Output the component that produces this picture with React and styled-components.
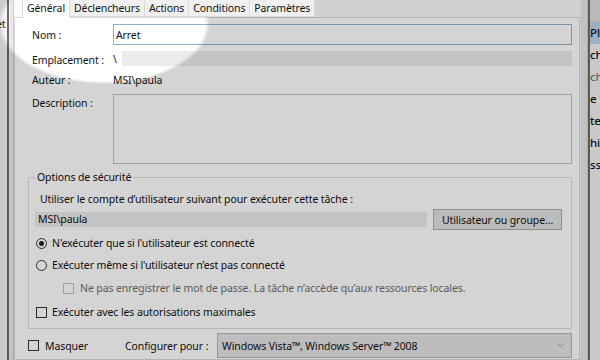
import React from "react";
import styled, { createGlobalStyle } from "styled-components";
import { ChevronDown } from "lucide-react";

const GlobalStyle = createGlobalStyle`
  html, body {
    margin: 0;
    padding: 0;
    background: #d3d3d3;
  }
  body {
    font-family: "Noto Sans", "Segoe UI", sans-serif;
    font-size: 10.5px;
    letter-spacing: -0.1px;
    color: #111;
  }
  * { box-sizing: border-box; }
`;

const Screen = styled.div`
  position: relative;
  width: 600px;
  height: 360px;
  overflow: hidden;
  display: flex;
  background: #f0f0f0;
`;

const LeftEdge = styled.div`
  flex: none;
  width: 14px;
  display: flex;
`;

const Sliver = styled.div`
  width: 7px;
  background: #f4f4f4;
  overflow: hidden;
  white-space: nowrap;
  padding-top: 17px;
  text-indent: -4px;
`;

const DarkLine = styled.div`
  width: 2px;
  background: #6c6c6c;
`;

const Frame = styled.div`
  flex: 1;
  background: #e8e8e8;
  border-left: 1px solid #f6f6f6;
  border-right: 1px solid #d0d0d0;
`;

const Dialog = styled.div`
  flex: 1;
  display: flex;
  flex-direction: column;
  background: #fbfbfb;
`;

const TabBar = styled.div`
  flex: none;
  height: 17px;
  display: flex;
  padding-left: 8px;
`;

const Tab = styled.div`
  height: ${({ $active }) => ($active ? "18px" : "17px")};
  line-height: 17px;
  padding: 0 ${({ $active }) => ($active ? "4px" : "4px")};
  background: ${({ $active }) => ($active ? "#fff" : "#f0f0f0")};
  border-right: 1px solid #d9d9d9;
  border-left: ${({ $active }) => ($active ? "1px solid #d9d9d9" : "none")};
  border-bottom: ${({ $active }) => ($active ? "none" : "1px solid #d9d9d9")};
  position: relative;
  z-index: 1;
`;

const Panel = styled.div`
  flex: 1;
  background: #fff;
  border: 1px solid #d9d9d9;
  padding: 6px 7px 0 13px;
`;

const FormGrid = styled.div`
  display: grid;
  grid-template-columns: 81px 1fr;
  grid-template-rows: 21px 15px 16px 70px;
  row-gap: 6px;
  padding-left: 4px;
`;

const Label = styled.div`
  align-self: ${({ $top }) => ($top ? "start" : "center")};
  padding-top: ${({ $top }) => ($top ? "2px" : "0")};
  margin-top: ${({ $shift }) => $shift || 0}px;
  white-space: nowrap;
`;

const TextInput = styled.div`
  height: 21px;
  border: 1px solid #8fb0cc;
  background: #fff;
  padding-left: 2px;
  display: flex;
  align-items: center;
`;

const ValueRow = styled.div`
  display: flex;
  align-items: center;
`;

const Slash = styled.span`
  width: 9px;
  flex: none;
`;

const ReadOnly = styled.div`
  flex: 1;
  height: 15px;
  background: #ebebeb;
  padding-left: 3px;
  line-height: 15px;
  margin-right: ${({ $mr }) => $mr || 0}px;
`;

const PlainValue = styled.div`
  align-self: center;
`;

const TextArea = styled.div`
  border: 1px solid #c4c4c4;
  background: #fff;
`;

const Group = styled.fieldset`
  margin: 5px 0 0 0;
  padding: 6px 9px 8px 6px;
  border: 1px solid #dcdcdc;
  min-inline-size: 0;
`;

const Legend = styled.legend`
  padding: 0 2px;
  line-height: 16px;
`;

const GroupText = styled.div`
  height: 16px;
  line-height: 16px;
  padding-left: 5px;
`;

const AccountRow = styled.div`
  display: flex;
  align-items: center;
  height: 21px;
  margin-top: 2px;
`;

const Button = styled.div`
  flex: none;
  width: 129px;
  height: 21px;
  border: 1px solid #adadad;
  background: #e1e1e1;
  display: flex;
  align-items: center;
  justify-content: center;
`;

const OptionRow = styled.div`
  display: flex;
  align-items: center;
  gap: ${({ $gap }) => $gap || 5}px;
  height: 16px;
  margin-top: ${({ $mt }) => $mt || 0}px;
  padding-left: ${({ $indent }) => $indent ?? 1}px;
  color: ${({ $disabled }) => ($disabled ? "#6d6d6d" : "inherit")};
  white-space: nowrap;
`;

const Radio = styled.span`
  flex: none;
  width: 11px;
  height: 11px;
  border: 1px solid #333;
  border-radius: 50%;
  background: #fff;
  display: flex;
  align-items: center;
  justify-content: center;
  &::after {
    content: "";
    display: ${({ $checked }) => ($checked ? "block" : "none")};
    width: 5px;
    height: 5px;
    border-radius: 50%;
    background: #222;
  }
`;

const Check = styled.span`
  flex: none;
  width: 11px;
  height: 11px;
  border: 1px solid ${({ $disabled }) => ($disabled ? "#bcbcbc" : "#333")};
  background: #fff;
`;

const FooterRow = styled.div`
  display: grid;
  grid-template-columns: 97px 92px 1fr;
  align-items: center;
  height: 25px;
  margin-top: 4px;
`;

const Select = styled.div`
  height: 25px;
  border: 1px solid #b4b4b4;
  background: #e3e3e3;
  padding: 0 6px 0 4px;
  display: flex;
  align-items: center;
  justify-content: space-between;
  white-space: nowrap;
`;

const RightEdge = styled.div`
  flex: none;
  width: 20px;
  display: flex;
`;

const OtherWindow = styled.div`
  width: 10px;
  background: #f2f2f2;
  overflow: hidden;
  white-space: nowrap;
`;

const OtherHeader = styled.div`
  height: 22px;
  background: #dedede;
  border-bottom: 1px solid #cfcfcf;
`;

const OtherRow = styled.div`
  height: 22px;
  line-height: 22px;
  font-size: 11.5px;
  font-weight: 500;
  color: ${({ $muted }) => ($muted ? "#777" : "#111")};
  background: ${({ $selected }) => ($selected ? "#bcd3ea" : "transparent")};
`;

const Spotlight = styled.div`
  position: absolute;
  inset: 0;
  pointer-events: none;
  background: radial-gradient(
    106px 60px at 104px 24px,
    rgba(0, 0, 0, 0) 95%,
    rgba(0, 0, 0, 0.17) 100%
  );
`;

const tabs = ["Général", "Déclencheurs", "Actions", "Conditions", "Paramètres"];

const otherRows = [
  { text: "Planifier", selected: true },
  { text: "chaque" },
  { text: "chaque", muted: true },
  { text: "e tâche" },
  { text: "tes" },
  { text: "historique" },
  { text: "ssss" },
];

export default function App() {
  return (
    <Screen>
      <GlobalStyle />
      <LeftEdge>
        <Sliver>et</Sliver>
        <DarkLine />
        <Frame />
      </LeftEdge>

      <Dialog>
        <TabBar>
          {tabs.map((t, i) => (
            <Tab key={t} $active={i === 0}>
              {t}
            </Tab>
          ))}
        </TabBar>
        <Panel>
          <FormGrid>
            <Label>Nom :</Label>
            <TextInput>Arret</TextInput>

            <Label $shift={3}>Emplacement :</Label>
            <ValueRow>
              <Slash>\</Slash>
              <ReadOnly />
            </ValueRow>

            <Label>Auteur :</Label>
            <PlainValue>MSI\paula</PlainValue>

            <Label $top>Description :</Label>
            <TextArea />
          </FormGrid>

          <Group>
            <Legend>Options de sécurité</Legend>
            <GroupText>
              Utiliser le compte d’utilisateur suivant pour exécuter cette tâche :
            </GroupText>
            <AccountRow>
              <ReadOnly $mr={6}>MSI\paula</ReadOnly>
              <Button>Utilisateur ou groupe...</Button>
            </AccountRow>
            <OptionRow $mt={5}>
              <Radio $checked />
              N'exécuter que si l'utilisateur est connecté
            </OptionRow>
            <OptionRow $mt={6}>
              <Radio />
              Exécuter même si l'utilisateur n’est pas connecté
            </OptionRow>
            <OptionRow $mt={7} $indent={28} $gap={6} $disabled>
              <Check $disabled />
              Ne pas enregistrer le mot de passe. La tâche n’accède qu’aux
              ressources locales.
            </OptionRow>
            <OptionRow $mt={8}>
              <Check />
              Exécuter avec les autorisations maximales
            </OptionRow>
          </Group>

          <FooterRow>
            <OptionRow $gap={6} $indent={0}>
              <Check />
              Masquer
            </OptionRow>
            <span>Configurer pour :</span>
            <Select>
              <span>Windows Vista™, Windows Server™ 2008</span>
              <ChevronDown size={9} color="#8a8a8a" strokeWidth={2} />
            </Select>
          </FooterRow>
        </Panel>
      </Dialog>

      <RightEdge>
        <Frame />
        <DarkLine />
        <OtherWindow>
          <OtherHeader />
          {otherRows.map((r, i) => (
            <OtherRow key={i} $selected={r.selected} $muted={r.muted}>
              {r.text}
            </OtherRow>
          ))}
        </OtherWindow>
      </RightEdge>

      <Spotlight />
    </Screen>
  );
}
